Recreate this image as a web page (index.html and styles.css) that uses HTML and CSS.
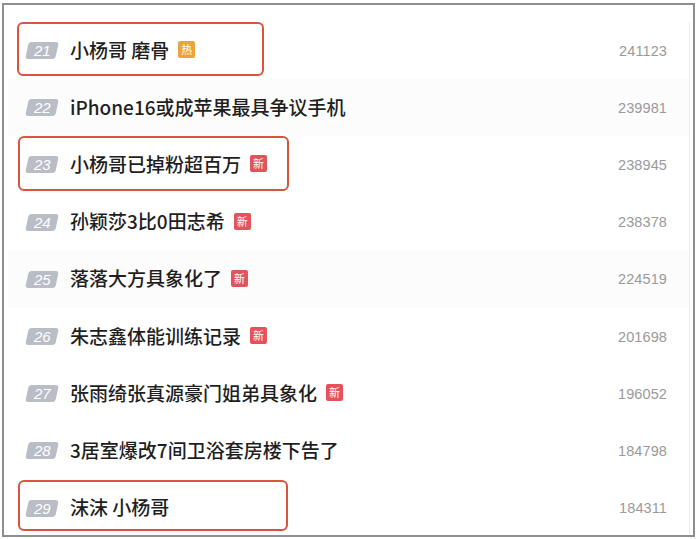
FILE: index.html
```html
<!DOCTYPE html>
<html lang="zh">
<head>
<meta charset="utf-8">
<link rel="stylesheet" href="styles.css">
</head>
<body>
<div class="frame">
  <div class="list">
    <div class="row">
      <span class="rank"><i>21</i></span>
      <span class="title">小杨哥 磨骨</span>
      <span class="tag hot">热</span>
      <span class="num">241123</span>
      <span class="mark mark-a"></span>
    </div>
    <div class="row shade">
      <span class="rank"><i>22</i></span>
      <span class="title">iPhone16或成苹果最具争议手机</span>
      <span class="num">239981</span>
    </div>
    <div class="row">
      <span class="rank"><i>23</i></span>
      <span class="title">小杨哥已掉粉超百万</span>
      <span class="tag new">新</span>
      <span class="num">238945</span>
      <span class="mark mark-b"></span>
    </div>
    <div class="row">
      <span class="rank"><i>24</i></span>
      <span class="title">孙颖莎3比0田志希</span>
      <span class="tag new">新</span>
      <span class="num">238378</span>
    </div>
    <div class="row shade">
      <span class="rank"><i>25</i></span>
      <span class="title">落落大方具象化了</span>
      <span class="tag new">新</span>
      <span class="num">224519</span>
    </div>
    <div class="row">
      <span class="rank"><i>26</i></span>
      <span class="title">朱志鑫体能训练记录</span>
      <span class="tag new">新</span>
      <span class="num">201698</span>
    </div>
    <div class="row">
      <span class="rank"><i>27</i></span>
      <span class="title">张雨绮张真源豪门姐弟具象化</span>
      <span class="tag new">新</span>
      <span class="num">196052</span>
    </div>
    <div class="row">
      <span class="rank"><i>28</i></span>
      <span class="title">3居室爆改7间卫浴套房楼下告了</span>
      <span class="num">184798</span>
    </div>
    <div class="row">
      <span class="rank"><i>29</i></span>
      <span class="title">沫沫 小杨哥</span>
      <span class="num">184311</span>
      <span class="mark mark-c"></span>
    </div>
  </div>
</div>
</body>
</html>
```

FILE: styles.css
```css
html, body {
  margin: 0;
  padding: 0;
  background: #ffffff;
}

.frame {
  box-sizing: border-box;
  width: 693px;
  height: 534px;
  margin: 3px 0 0 2px;
  border: 2px solid #8e8e8e;
  background: #ffffff;
  padding-top: 17px;
}

.list {
  margin-left: 4px;
  width: 682px;
  border-right: 1px solid #ebebed;
  height: 100%;
  box-sizing: border-box;
}

.row {
  position: relative;
  display: flex;
  align-items: center;
  height: 57.2px;
  padding: 0 22px 0 19px;
  box-sizing: border-box;
}

.row.shade {
  background: #fcfcfc;
}

.rank {
  display: flex;
  align-items: center;
  justify-content: center;
  width: 30px;
  height: 17px;
  background: #b9bdc6;
  border-radius: 3px;
  transform: skewX(-12deg);
  margin-right: 13px;
  flex: none;
}

.rank i {
  display: block;
  transform: skewX(12deg);
  font-family: "Liberation Sans", Arial, sans-serif;
  font-style: italic;
  font-size: 15px;
  line-height: 17px;
  color: #ffffff;
}

.title {
  font-family: "Noto Sans CJK SC", "Noto Sans", sans-serif;
  font-weight: 500;
  font-size: 19px;
  line-height: 24px;
  color: #1f1f1f;
  margin-top: -2px;
  white-space: nowrap;
}

.tag {
  display: flex;
  align-items: center;
  justify-content: center;
  width: 17px;
  height: 17px;
  margin-left: 9px;
  border-radius: 2px;
  font-family: "Noto Sans CJK SC", sans-serif;
  font-size: 11px;
  line-height: 17px;
  color: #ffffff;
  flex: none;
  margin-top: -2px;
}

.tag.hot {
  background: #eea33a;
}

.tag.new {
  background: #e5525c;
}

.num {
  margin-left: auto;
  font-family: "Liberation Sans", Arial, sans-serif;
  font-size: 14.5px;
  color: #9a9a9a;
  letter-spacing: 0.1px;
}

.mark {
  position: absolute;
  box-sizing: border-box;
  border: 2px solid #d9533f;
  border-radius: 6px;
}

.mark-a {
  top: 0;
  left: 9px;
  width: 247px;
  height: 54px;
}

.mark-b {
  top: 0;
  left: 10px;
  width: 271px;
  height: 55px;
}

.mark-c {
  top: 0;
  left: 10px;
  width: 270px;
  height: 51px;
}
```
